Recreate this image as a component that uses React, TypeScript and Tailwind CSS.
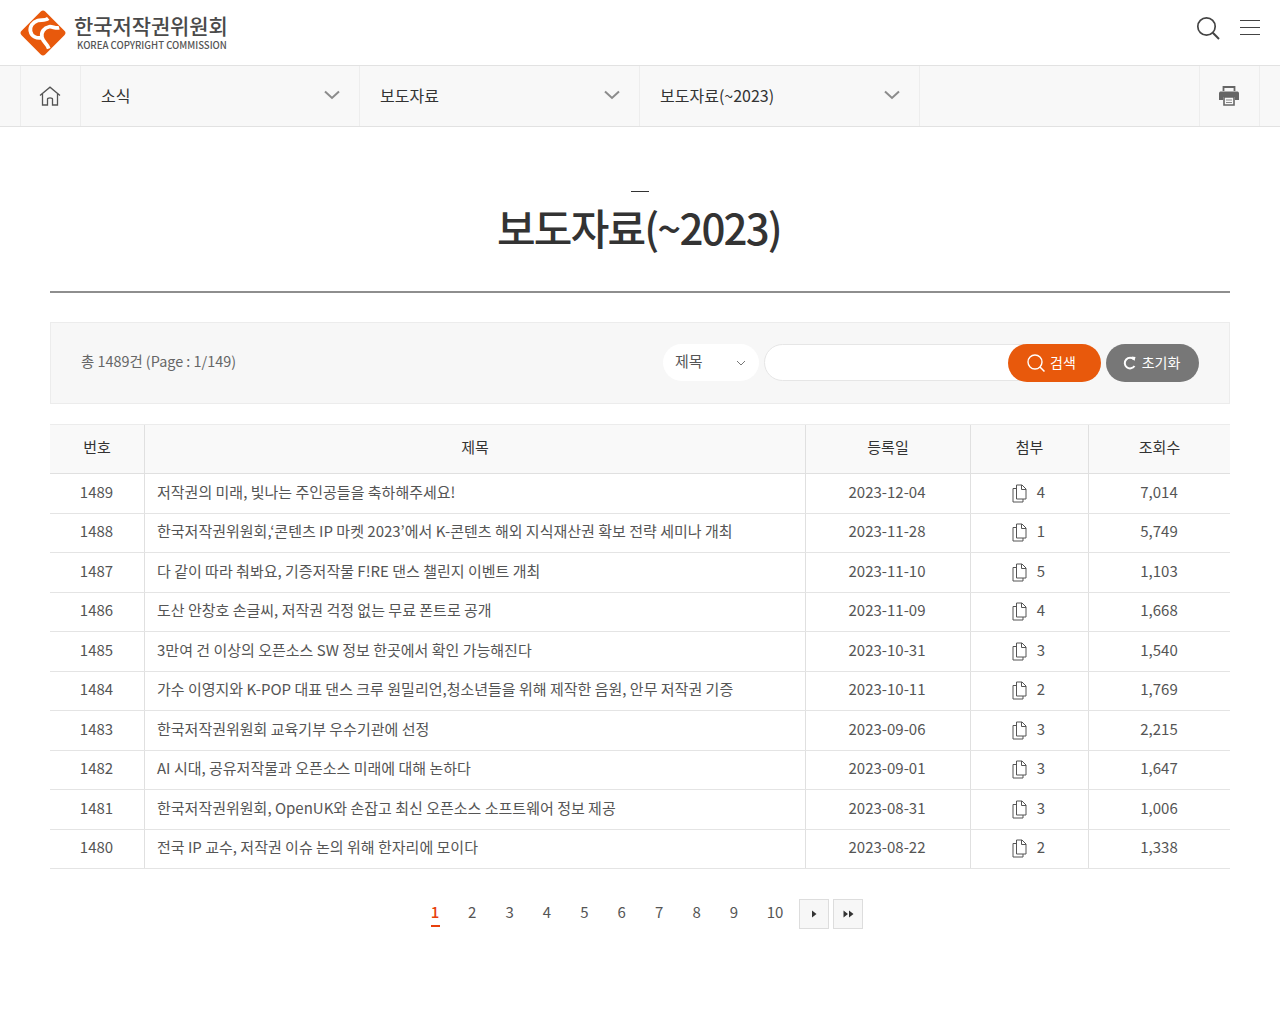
import React from "react";

const rows = [
  ["1489", "저작권의 미래, 빛나는 주인공들을 축하해주세요!", "2023-12-04", "4", "7,014"],
  ["1488", "한국저작권위원회,‘콘텐츠 IP 마켓 2023’에서 K-콘텐츠 해외 지식재산권 확보 전략 세미나 개최", "2023-11-28", "1", "5,749"],
  ["1487", "다 같이 따라 춰봐요, 기증저작물 F!RE 댄스 챌린지 이벤트 개최", "2023-11-10", "5", "1,103"],
  ["1486", "도산 안창호 손글씨, 저작권 걱정 없는 무료 폰트로 공개", "2023-11-09", "4", "1,668"],
  ["1485", "3만여 건 이상의 오픈소스 SW 정보 한곳에서 확인 가능해진다", "2023-10-31", "3", "1,540"],
  ["1484", "가수 이영지와 K-POP 대표 댄스 크루 원밀리언,청소년들을 위해 제작한 음원, 안무 저작권 기증", "2023-10-11", "2", "1,769"],
  ["1483", "한국저작권위원회 교육기부 우수기관에 선정", "2023-09-06", "3", "2,215"],
  ["1482", "AI 시대, 공유저작물과 오픈소스 미래에 대해 논하다", "2023-09-01", "3", "1,647"],
  ["1481", "한국저작권위원회, OpenUK와 손잡고 최신 오픈소스 소프트웨어 정보 제공", "2023-08-31", "3", "1,006"],
  ["1480", "전국 IP 교수, 저작권 이슈 논의 위해 한자리에 모이다", "2023-08-22", "2", "1,338"],
];

function Logo() {
  return (
    <svg width="48" height="48" viewBox="0 0 46 46" className="shrink-0">
      <rect x="7" y="7" width="32" height="32" rx="3" transform="rotate(45 23 23)" fill="#e8590c" />
      <path d="M28 9 C25 11.5 21 10 18 11 C13 12.5 10 17 11 21.5 C12 26.5 17 28.5 22 27.5" fill="none" stroke="#fff" strokeWidth="3.6" />
      <path d="M38.5 18 C35 19 32 16.5 29 17 C24 18 21 22 22 27 C23 32 27 33 28.5 38" fill="none" stroke="#fff" strokeWidth="3.6" />
    </svg>
  );
}

function Chevron() {
  return (
    <svg width="16" height="10" viewBox="0 0 16 10" className="shrink-0">
      <path d="M1 1.5 L8 8 L15 1.5" fill="none" stroke="#8c8c8c" strokeWidth="2" />
    </svg>
  );
}

function NavCell({ label, w }: { label: string; w: string }) {
  return (
    <div className={w + " h-full flex items-center justify-between pl-5 pr-[19px] pb-[3px] border-r border-[#ededed] text-[16px] text-[#333]"}>
      <span>{label}</span>
      <Chevron />
    </div>
  );
}

function FileIcon() {
  return (
    <svg width="15" height="19" viewBox="0 0 15 19" className="shrink-0 mt-[3px]">
      <path d="M1 4.5 H5 M1 4.5 V18 H11 V15" fill="none" stroke="#555" strokeWidth="1" />
      <path d="M4.5 1 H10 L14 5 V15 H4.5 Z" fill="none" stroke="#555" strokeWidth="1" />
      <path d="M9.5 1 L9.5 5.5 H14" fill="none" stroke="#555" strokeWidth="1" />
    </svg>
  );
}

const th = "h-full flex items-center justify-center pb-[3px] border-r border-[#e0e0e0] text-[15px] text-[#333]";
const td = "h-full flex items-center justify-center pb-[3px] pr-[2px] border-r border-[#e0e0e0]";

export default function App() {
  return (
    <div className="w-[1280px] h-[1024px] bg-white text-[#555] font-['Noto_Sans_CJK_KR','Noto_Sans',sans-serif] overflow-hidden">
      <header className="h-[65px] flex items-center justify-between pl-[19px] pr-5">
        <div className="flex items-center gap-[7px]">
          <Logo />
          <div className="flex flex-col -mt-[2px]">
            <span className="text-[21px] leading-[26px] text-[#4a4a4a] font-medium tracking-[-0.1px] whitespace-nowrap">한국저작권위원회</span>
            <span className="text-[9.6px] leading-[12px] mt-[1px] pl-[3px] text-[#555] font-medium whitespace-nowrap">KOREA COPYRIGHT COMMISSION</span>
          </div>
        </div>
        <div className="flex items-center gap-[20px] -mt-[10px]">
          <svg width="24" height="24" viewBox="0 0 24 24">
            <circle cx="10.5" cy="10.5" r="8.7" fill="none" stroke="#444" strokeWidth="1.7" />
            <path d="M16.8 16.8 L23 23" stroke="#444" strokeWidth="2" />
          </svg>
          <div className="w-5 h-[15px] flex flex-col justify-between">
            <div className="h-px bg-[#444]" />
            <div className="h-px bg-[#444]" />
            <div className="h-px bg-[#444]" />
          </div>
        </div>
      </header>

      <nav className="h-[62px] flex bg-[#f8f8f8] border-y border-[#e2e2e2]">
        <div className="w-[21px] h-full border-r border-[#ededed]" />
        <div className="w-[60px] h-full flex items-center justify-center pb-[1px] pr-[2px] border-r border-[#ededed]">
          <svg width="22" height="20" viewBox="0 0 22 20">
            <path d="M1 9.5 L11 1.2 L21 9.5 M3.5 8 V19 H8.5 V13 C8.5 11.5 13.5 11.5 13.5 13 V19 H18.5 V8" fill="none" stroke="#555" strokeWidth="1.3" />
          </svg>
        </div>
        <NavCell w="w-[279px]" label="소식" />
        <NavCell w="w-[280px]" label="보도자료" />
        <NavCell w="w-[280px]" label="보도자료(~2023)" />
        <div className="w-[280px] h-full border-r border-[#ededed]" />
        <div className="w-[60px] h-full flex items-center justify-center pr-[2px] pb-[2px] border-r border-[#ededed]">
          <svg width="20" height="21" viewBox="0 0 20 21">
            <path d="M4.5 6 V2 H15.5 V6" fill="none" stroke="#666" strokeWidth="1.8" />
            <path d="M1.5 6.5 H18.5 C19.5 6.5 20 7.5 20 8.5 V15 H16 V12 H4 V15 H0 V8.5 C0 7.5 .5 6.5 1.5 6.5 Z" fill="#666" />
            <path d="M5 12 H15 V20 H5 Z" fill="#f8f8f8" stroke="#666" strokeWidth="1.6" />
            <path d="M7 15 H13 M7 17.5 H13" stroke="#888" strokeWidth="1" />
          </svg>
        </div>
      </nav>

      <main className="px-[50px]">
        <div className="flex flex-col items-center pt-[64px] h-[166px] border-b-2 border-[#8e8e8e]">
          <div className="w-[18px] h-px bg-[#333]" />
          <h1 className="mt-[3px] pr-[2px] text-[42px] leading-[64px] text-[#333] font-medium tracking-[-1.85px] whitespace-nowrap">보도자료(~2023)</h1>
        </div>

        <div className="mt-[29px] h-[82px] bg-[#f7f7f7] border border-[#ececec] flex items-center justify-between px-[30px]">
          <span className="text-[14.4px] text-[#666] pb-[5px]">총 1489건 (Page : 1/149)</span>
          <div className="flex items-center -mt-[1px]">
            <div className="w-[96px] h-[37px] rounded-full bg-white flex items-center justify-between pl-3 pr-[13px] text-[15px] text-[#555]">
              <span className="pb-[3px]">제목</span>
              <svg width="10" height="6" viewBox="0 0 10 6"><path d="M1 1 L5 5 L9 1" fill="none" stroke="#777" /></svg>
            </div>
            <div className="ml-[5px] w-[260px] h-[37px] rounded-l-full bg-white border border-[#e6e6e6]" />
            <button className="-ml-[16px] relative w-[93px] h-[38px] rounded-full bg-[#e8590c] text-white text-[14px] flex items-center justify-center gap-[4px] pr-[7px]">
              <svg width="20" height="20" viewBox="0 0 20 20">
                <circle cx="9" cy="9" r="7" fill="none" stroke="#fff" strokeWidth="1.4" />
                <path d="M14 14 L18.5 18.5" stroke="#fff" strokeWidth="1.5" />
              </svg>
              <span className="pb-[1px]">검색</span>
            </button>
            <button className="ml-[5px] w-[93px] h-[38px] rounded-full bg-[#777] text-white text-[14px] flex items-center justify-center gap-[6px] pr-[2px]">
              <svg width="13" height="14" viewBox="0 0 13 14">
                <path d="M11 3.5 A5.3 5.3 0 1 0 11.5 10" fill="none" stroke="#fff" strokeWidth="2" />
                <path d="M8.5 0.5 L12.5 1 L11.5 5 Z" fill="#fff" />
              </svg>
              <span className="pb-[1px]">초기화</span>
            </button>
          </div>
        </div>

        <div className="mt-5 text-[15px]">
          <div className="h-[50px] grid grid-cols-[95px_661px_165px_118px_141px] bg-[#f9f9f9] border-t border-[#ececec] border-b border-b-[#e0e0e0]">
            <div className={th}>번호</div>
            <div className={th}>제목</div>
            <div className={th}>등록일</div>
            <div className={th}>첨부</div>
            <div className="h-full flex items-center justify-center pb-[3px] text-[15px] text-[#333]">조회수</div>
          </div>
          {rows.map((r) => (
            <div key={r[0]} className="h-[39.5px] grid grid-cols-[95px_661px_165px_118px_141px] border-b border-[#e4e4e4]">
              <div className="h-full flex items-center justify-center pb-[3px] pr-[1px] border-r border-[#e0e0e0]">{r[0]}</div>
              <div className="h-full flex items-center justify-start pb-[3px] border-r border-[#e0e0e0] pl-[12px] whitespace-nowrap">{r[1]}</div>
              <div className={td}>{r[2]}</div>
              <div className={td + " gap-[10px]"}>
                <FileIcon />
                <span>{r[3]}</span>
              </div>
              <div className="h-full flex items-center justify-center pb-[3px] pr-[1px]">{r[4]}</div>
            </div>
          ))}
        </div>

        <div className="mt-[29px] ml-[370px] flex items-center h-[32px] text-[15px] text-[#555]">
          <span className="relative w-[30px] text-center text-[#e8400c] font-medium pb-[3px]">
            1
            <span className="absolute left-[10.5px] bottom-0 w-[9px] h-[2px] bg-[#e8400c]" />
          </span>
          {["2", "3", "4", "5", "6", "7", "8", "9"].map((n) => (
            <span key={n} className="w-[37.4px] text-center pl-[7px] pb-[3px]">{n}</span>
          ))}
          <span className="w-[50px] text-center pl-[2px] pb-[3px]">10</span>
          <div className="w-[30px] h-[30px] bg-[#f7f7f7] border border-[#ddd] flex items-center justify-center">
            <svg width="6" height="8" viewBox="0 0 6 8"><path d="M1 0.5 L5.5 4 L1 7.5 Z" fill="#333" /></svg>
          </div>
          <div className="ml-[4px] w-[30px] h-[30px] bg-[#f7f7f7] border border-[#ddd] flex items-center justify-center">
            <svg width="11" height="8" viewBox="0 0 11 8"><path d="M0.5 0.5 L5 4 L0.5 7.5 Z M6 0.5 L10.5 4 L6 7.5 Z" fill="#333" /></svg>
          </div>
        </div>
      </main>
    </div>
  );
}
